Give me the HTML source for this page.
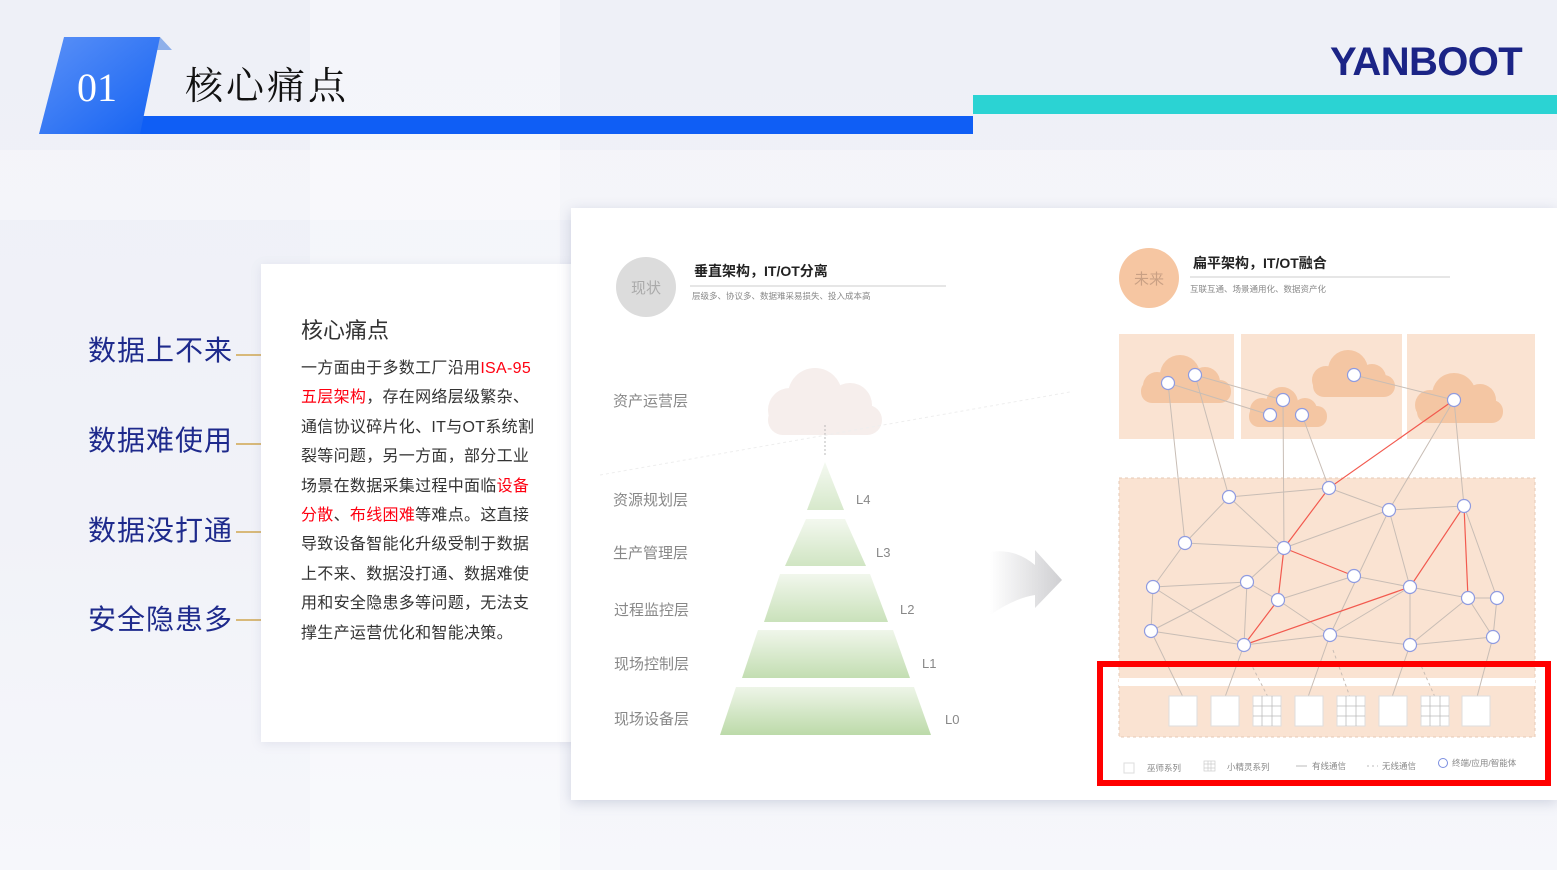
<!DOCTYPE html>
<html><head><meta charset="utf-8"><style>
body{margin:0;width:1557px;height:870px;overflow:hidden;position:relative;font-family:"Liberation Sans","Noto Sans CJK SC",sans-serif;background:linear-gradient(180deg,#eef0f7 0%,#f1f2f8 60%,#f6f7fb 100%);}
.abs{position:absolute}
.lbl{position:absolute;left:88px;font-size:28px;color:#1e2a8c;letter-spacing:1px;line-height:32px}
.ln{position:absolute;left:236px;width:50px;height:2px;background:#d8b97a}
</style></head><body>
<div class="abs" style="left:0;top:0;width:1557px;height:870px;background:
linear-gradient(90deg,transparent 310px,rgba(255,255,255,.35) 310px,rgba(255,255,255,.35) 560px,transparent 560px),
linear-gradient(180deg,transparent 150px,rgba(255,255,255,.3) 150px,rgba(255,255,255,.3) 220px,transparent 220px);"></div>
<div class="abs" style="left:140px;top:116px;width:833px;height:18px;background:#0f5ef5"></div>
<div class="abs" style="left:973px;top:95px;width:584px;height:19px;background:#2bd3d3"></div>
<svg class="abs" style="left:0;top:0" width="200" height="150">
<defs><linearGradient id="bg1" x1="0" y1="0" x2="1" y2="1"><stop offset="0" stop-color="#5b91f7"/><stop offset="1" stop-color="#1462f2"/></linearGradient></defs>
<polygon points="160,37 172,50 150,50" fill="#8fb0ea"/>
<polygon points="64,37 160,37 140,134 39,134" fill="url(#bg1)"/>
</svg>
<div class="abs" style="left:77px;top:66px;font-family:'Liberation Serif',serif;font-size:40px;color:#fff;line-height:44px">01</div>
<div class="abs" style="left:185px;top:64px;font-family:'Liberation Serif','Noto Serif CJK SC',serif;font-size:38px;color:#111;letter-spacing:3px;line-height:46px">核心痛点</div>
<div class="abs" style="left:1330px;top:40px;font-size:40px;font-weight:bold;color:#1b2486;letter-spacing:-0.6px;line-height:44px">YANBOOT</div>
<div class="lbl" style="top:335px">数据上不来</div><div class="ln" style="top:354px"></div>
<div class="lbl" style="top:425px">数据难使用</div><div class="ln" style="top:443px"></div>
<div class="lbl" style="top:515px">数据没打通</div><div class="ln" style="top:531px"></div>
<div class="lbl" style="top:604px">安全隐患多</div><div class="ln" style="top:619px"></div>
<div class="abs" style="left:261px;top:264px;width:320px;height:478px;background:#fff;box-shadow:0 2px 10px rgba(120,130,170,.15)"></div>
<div class="abs" style="left:301px;top:316px;font-size:22px;color:#333;line-height:30px">核心痛点</div>
<div class="abs" style="left:301px;top:354px;width:236px;font-size:16px;letter-spacing:0.3px;color:#333;line-height:29.4px;">一方面由于多数工厂沿用<span style="color:#f01">ISA-95 五层架构</span>，存在网络层级繁杂、通信协议碎片化、IT与OT系统割裂等问题，另一方面，部分工业场景在数据采集过程中面临<span style="color:#f01">设备分散</span>、<span style="color:#f01">布线困难</span>等难点。这直接导致设备智能化升级受制于数据上不来、数据没打通、数据难使用和安全隐患多等问题，无法支撑生产运营优化和智能决策。</div>
<div class="abs" style="left:571px;top:208px;width:986px;height:592px;background:#fff;box-shadow:0 3px 12px rgba(100,110,150,.25)"></div>
<svg class="abs" style="left:0;top:0" width="1557" height="870" font-family="Liberation Sans,Noto Sans CJK SC,sans-serif">
<defs>
<linearGradient id="pg" x1="0" y1="0" x2="0" y2="1"><stop offset="0" stop-color="#eef5e8"/><stop offset="1" stop-color="#bcdaa9"/></linearGradient>
<linearGradient id="ag" x1="0" y1="0" x2="1" y2="0"><stop offset="0" stop-color="#fff"/><stop offset="1" stop-color="#cfcfd2"/></linearGradient>
</defs>
<circle cx="646" cy="287" r="30" fill="#dcdcdc"/>
<text x="646" y="293" font-size="15" fill="#aaa" text-anchor="middle">现状</text>
<text x="694" y="276" font-size="14" font-weight="bold" fill="#222">垂直架构，IT/OT分离</text>
<line x1="690" y1="286" x2="946" y2="286" stroke="#ccc"/>
<text x="692" y="299" font-size="8.5" fill="#888">层级多、协议多、数据难采易损失、投入成本高</text>
<g fill="#f6eeec"><circle cx="815" cy="395" r="27"/><circle cx="790" cy="410" r="22"/><circle cx="850" cy="405" r="22"/><rect x="768" y="405" width="114" height="30" rx="15"/></g>
<line x1="825" y1="425" x2="825" y2="455" stroke="#aaa" stroke-width="0.8" stroke-dasharray="2,2"/>
<line x1="600" y1="475" x2="1070" y2="392" stroke="#eee" stroke-dasharray="3,3"/>
<polygon points="825,462 844,510 807,510" fill="url(#pg)" opacity=".6"/>
<polygon points="806,519 845,519 866,566 785,566" fill="url(#pg)" opacity=".7"/>
<polygon points="780,574 870,574 888,622 764,622" fill="url(#pg)" opacity=".8"/>
<polygon points="758,630 893,630 910,678 742,678" fill="url(#pg)" opacity=".9"/>
<polygon points="736,687 914,687 931,735 720,735" fill="url(#pg)"/>
<g font-size="15" fill="#888"><text x="613" y="406">资产运营层</text><text x="613" y="505">资源规划层</text><text x="613" y="558">生产管理层</text><text x="614" y="615">过程监控层</text><text x="614" y="669">现场控制层</text><text x="614" y="724">现场设备层</text></g>
<g font-size="13" fill="#888"><text x="856" y="504">L4</text><text x="876" y="557">L3</text><text x="900" y="614">L2</text><text x="922" y="668">L1</text><text x="945" y="724">L0</text></g>
<path d="M990,552 Q1015,548 1035,565 L1035,550 L1062,580 L1035,608 L1035,595 Q1015,598 990,615 Z" fill="url(#ag)"/>
<circle cx="1149" cy="278" r="30" fill="#f6c6a2"/>
<text x="1149" y="284" font-size="15" fill="#c9a084" text-anchor="middle">未来</text>
<text x="1193" y="268" font-size="14" font-weight="bold" fill="#222">扁平架构，IT/OT融合</text>
<line x1="1190" y1="277" x2="1450" y2="277" stroke="#ccc"/>
<text x="1190" y="292" font-size="8.5" fill="#888">互联互通、场景通用化、数据资产化</text>
<g fill="#fae3d2"><rect x="1119" y="334" width="115" height="105"/><rect x="1241" y="334" width="161" height="105"/><rect x="1407" y="334" width="128" height="105"/></g>
<rect x="1119" y="478" width="416" height="259" fill="#fae3d2" stroke="#e5c9b5" stroke-dasharray="3,3"/>
<rect x="1119" y="678" width="416" height="8" fill="#fff"/>
<g fill="#f4c6a3">
<circle cx="1180" cy="375" r="20"/><circle cx="1157" cy="386" r="14"/><circle cx="1205" cy="382" r="15"/><rect x="1141" y="380" width="90" height="23" rx="11"/>
<circle cx="1282" cy="403" r="16"/><circle cx="1262" cy="410" r="12"/><circle cx="1305" cy="410" r="12"/><rect x="1249" y="406" width="78" height="21" rx="10"/>
<circle cx="1348" cy="370" r="20"/><circle cx="1326" cy="380" r="14"/><circle cx="1372" cy="378" r="14"/><rect x="1313" y="375" width="82" height="22" rx="11"/>
<circle cx="1454" cy="395" r="22"/><circle cx="1430" cy="405" r="15"/><circle cx="1480" cy="400" r="16"/><rect x="1417" y="400" width="86" height="23" rx="11"/>
</g>
<g stroke="#c8bdb5" stroke-width="1" fill="none">
<path d="M1168,383L1185,543M1195,375L1229,497M1168,383L1270,415M1195,375L1283,400M1283,400L1284,548M1302,415L1329,488M1354,375L1454,400M1454,400L1389,510M1454,400L1464,506M1229,497L1329,488M1229,497L1185,543M1229,497L1284,548M1329,488L1389,510M1389,510L1464,506M1185,543L1284,548M1284,548L1389,510M1185,543L1153,587M1284,548L1247,582M1153,587L1247,582M1153,587L1151,631M1153,587L1244,645M1247,582L1151,631M1247,582L1244,645M1247,582L1278,600M1278,600L1354,576M1278,600L1330,635M1354,576L1410,587M1389,510L1410,587M1389,510L1330,635M1410,587L1468,598M1468,598L1497,598M1464,506L1497,598M1468,598L1493,637M1497,598L1493,637M1151,631L1244,645M1244,645L1330,635M1330,635L1410,587M1410,587L1410,645M1468,598L1410,645M1410,645L1493,637M1330,635L1410,645"/>
<path d="M1151,631L1183,697M1244,645L1225,697M1330,635L1308,697M1410,645L1392,697M1493,637L1477,697"/>
<path d="M1250,662L1268,697M1333,650L1350,697M1419,661L1435,697" stroke-dasharray="3,3"/>
</g>
<g stroke="#f25a4f" stroke-width="1.2" fill="none"><path d="M1454,400L1329,488L1284,548L1278,600L1244,645L1410,587L1464,506L1468,598M1284,548L1354,576"/></g>
<g fill="#fff" stroke="#8f9be0" stroke-width="1.2">
<circle cx="1168" cy="383" r="6.5"/><circle cx="1195" cy="375" r="6.5"/><circle cx="1283" cy="400" r="6.5"/><circle cx="1270" cy="415" r="6.5"/><circle cx="1302" cy="415" r="6.5"/><circle cx="1354" cy="375" r="6.5"/><circle cx="1454" cy="400" r="6.5"/><circle cx="1229" cy="497" r="6.5"/><circle cx="1329" cy="488" r="6.5"/><circle cx="1389" cy="510" r="6.5"/><circle cx="1464" cy="506" r="6.5"/><circle cx="1185" cy="543" r="6.5"/><circle cx="1284" cy="548" r="6.5"/><circle cx="1354" cy="576" r="6.5"/><circle cx="1410" cy="587" r="6.5"/><circle cx="1153" cy="587" r="6.5"/><circle cx="1247" cy="582" r="6.5"/><circle cx="1278" cy="600" r="6.5"/><circle cx="1468" cy="598" r="6.5"/><circle cx="1497" cy="598" r="6.5"/><circle cx="1151" cy="631" r="6.5"/><circle cx="1244" cy="645" r="6.5"/><circle cx="1330" cy="635" r="6.5"/><circle cx="1410" cy="645" r="6.5"/><circle cx="1493" cy="637" r="6.5"/>
</g>
<g fill="#fff" stroke="#ddd">
<rect x="1169" y="696" width="28" height="30"/><rect x="1211" y="696" width="28" height="30"/><rect x="1253" y="696" width="28" height="30"/><rect x="1295" y="696" width="28" height="30"/><rect x="1337" y="696" width="28" height="30"/><rect x="1379" y="696" width="28" height="30"/><rect x="1421" y="696" width="28" height="30"/><rect x="1462" y="696" width="28" height="30"/>
</g>
<g stroke="#bbb" stroke-width="0.8">
<path d="M1262,696V726M1272,696V726M1253,706H1281M1253,716H1281"/>
<path d="M1346,696V726M1356,696V726M1337,706H1365M1337,716H1365"/>
<path d="M1430,696V726M1440,696V726M1421,706H1449M1421,716H1449"/>
</g>
<rect x="1124" y="763" width="10" height="10" fill="none" stroke="#ddd"/>
<text x="1147" y="771" font-size="8.5" fill="#888">巫师系列</text>
<g stroke="#ccc" stroke-width="0.7"><rect x="1204" y="761" width="11" height="10" fill="none"/><path d="M1208,761V771M1211,761V771M1204,764H1215M1204,768H1215"/></g>
<text x="1227" y="770" font-size="8.5" fill="#888">小精灵系列</text>
<line x1="1296" y1="766" x2="1307" y2="766" stroke="#bbb"/>
<text x="1312" y="769" font-size="8.5" fill="#888">有线通信</text>
<line x1="1367" y1="766" x2="1378" y2="766" stroke="#bbb" stroke-dasharray="2,3"/>
<text x="1382" y="769" font-size="8.5" fill="#888">无线通信</text>
<circle cx="1443" cy="763" r="4.5" fill="none" stroke="#7b8ee0"/>
<text x="1452" y="766" font-size="8.5" fill="#888">终端/应用/智能体</text>
<rect x="1100" y="664" width="448" height="119" fill="none" stroke="#f00" stroke-width="6"/>
</svg>
</body></html>
